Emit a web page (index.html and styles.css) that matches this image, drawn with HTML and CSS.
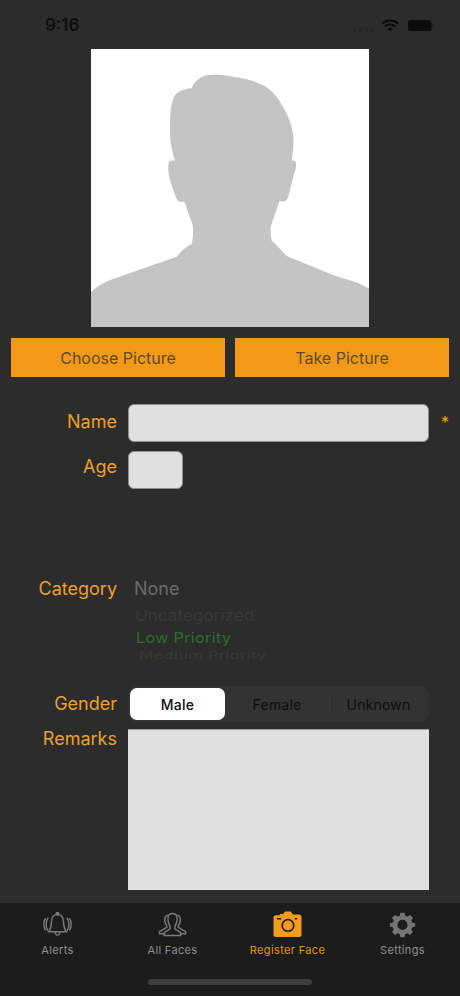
FILE: index.html
```html
<!DOCTYPE html>
<html lang="en">
<head>
<meta charset="utf-8">
<title>Register Face</title>
<link rel="stylesheet" href="styles.css">
</head>
<body>
<div class="app">
  <main class="main">
    <header class="status">
      <span class="time">9:16</span>
      <div class="status-icons">
        <svg class="signal" viewBox="0 0 21 5"><g fill="#262626"><rect x="0" y="0" width="3.500" height="5" rx="1"/><rect x="5.800" y="0" width="3.500" height="5" rx="1"/><rect x="11.600" y="0" width="3.500" height="5" rx="1"/><rect x="17.400" y="0" width="3.500" height="5" rx="1"/></g></svg>
        <svg class="wifi" viewBox="0 0 18 13"><path d="M1 4.600C5.600.4 12.400.4 17 4.600M3.900 7.400C6.900 4.800 11.100 4.800 14.100 7.400" fill="none" stroke="#0c0c0c" stroke-width="2.100"/><path d="M6.200 9.600C7.900 8.300 10.100 8.300 11.800 9.600L9 12.600Z" fill="#0c0c0c"/></svg>
        <svg class="battery" viewBox="0 0 26 11"><rect x="0" y="0" width="23.500" height="11" rx="2.600" fill="#0c0c0c"/><rect x="24.200" y="3.600" width="1.600" height="3.800" rx=".8" fill="#222"/></svg>
      </div>
    </header>

    <div class="photo">
      <svg class="silhouette" viewBox="91 49 278 278" aria-label="Face placeholder">
        <path fill="#c4c4c4" d="M91 327V292C96 287 103 283 110 280L176.700 256.700C181 251 186 247 191.700 244C193 238 193.500 232 192.700 225C190 218 187 210 185 202.500L183.300 201.700C181 202 179.500 202 178 201C175.500 197 174.500 193 173.300 190C171 183 168.500 177 168.300 170C168 165 168.500 161 170.500 160.700C172 160.400 173.500 160.500 175 160.700C172 151 170 142 170 133C169.800 123 170 115 171 108C172 102 173 98 175 95C179 91 185 89 191.700 88.300C193 84.500 195 81.500 198 79.500C200 78 202 76.800 204 76C209 74.800 214 74.700 220 75C226 75.300 231 76.300 236.700 77.300C246 79 255 81 263 85C272 90 278 98 283 106.700C288 115 292 125 293.300 136.700C293.800 145 293 153 291.700 160.700C293 160.300 295 160.700 296 162.500C296.500 167 295 172 293.300 176.700C291.500 184 290 190 288.300 196.700C287 199.500 285.500 201.300 283.300 201.700L279.300 201C277 210 273 218 270.700 227C270.500 232 270.800 236.500 271.700 240.700C277 245 282 251 286.700 256L333 275C341 278 350 280 358 283L369 288.500V327Z"/>
      </svg>
    </div>

    <div class="actions">
      <button class="action" type="button">Choose Picture</button>
      <button class="action" type="button">Take Picture</button>
    </div>

    <form class="form">
      <div class="row name-row">
        <label class="label">Name</label>
        <div class="input input-name"></div>
        <span class="required">*</span>
      </div>
      <div class="row age-row">
        <label class="label">Age</label>
        <div class="input input-age"></div>
      </div>
      <div class="row category-row">
        <label class="label">Category</label>
        <div class="picker">
          <div class="pick pick-none">None</div>
          <div class="pick pick-uncat">Uncategorized</div>
          <div class="pick pick-low">Low Priority</div>
          <div class="pick pick-med">Medium Priority</div>
        </div>
      </div>
      <div class="row gender-row">
        <label class="label">Gender</label>
        <div class="segments">
          <div class="segment segment-on">Male</div>
          <div class="segment segment-female">Female</div>
          <div class="divider"></div>
          <div class="segment">Unknown</div>
        </div>
      </div>
      <div class="row remarks-row">
        <label class="label">Remarks</label>
        <div class="remarks"></div>
      </div>
    </form>
  </main>

  <nav class="tabbar">
    <div class="tabs">
      <div class="tab">
        <svg class="tab-icon" viewBox="0 0 30 28" fill="none" stroke="#7a7a7a" stroke-width="1.500"><path d="M15 3.500C10.800 3.500 9 6.800 8.800 11C8.600 15.500 8 18.500 5.800 21.500H24.200C22 18.500 21.400 15.500 21.200 11C21 6.800 19.200 3.500 15 3.500Z"/><circle cx="15" cy="2.800" r="1.300" fill="#7a7a7a"/><path d="M12.500 21.500C12.700 23.800 13.800 25 15 25C16.200 25 17.300 23.800 17.500 21.500"/><path d="M5.300 7C2.600 10.500 2.600 17 5 20.500M2.700 7.500C.3 11 .3 16.500 2.500 20M24.700 7C27.400 10.500 27.400 17 25 20.500M27.300 7.500C29.700 11 29.700 16.500 27.500 20"/></svg>
        <span class="tab-label">Alerts</span>
      </div>
      <div class="tab">
        <svg class="tab-icon" viewBox="0 0 30 28" fill="none" stroke="#7a7a7a" stroke-width="1.500"><path d="M11 4C7.500 4.300 6.500 7 7 10.500C7.300 12.500 8 14 9 15.500V17L1.500 21.500V23.500H7"/><path d="M19 4C22.500 4.300 23.500 7 23 10.500C22.700 12.500 22 14 21 15.500V17L28.500 21.500V23.500H23"/><path d="M15 2.500C11 2.500 9.800 5.800 10.300 9.500C10.600 12 11.500 14.500 12.500 16V18.500L6.500 22.500V25.500H23.500V22.500L17.500 18.500V16C18.500 14.500 19.400 12 19.700 9.500C20.200 5.800 19 2.500 15 2.500Z"/></svg>
        <span class="tab-label">All Faces</span>
      </div>
      <div class="tab tab-on">
        <svg class="tab-icon" viewBox="0 0 30 28"><path fill="#f39c1f" d="M3 4.500H7V3H10.500L12.500 .5H18.500L20.500 3.500H27C28.500 3.500 29.500 4.500 29.500 6V25C29.500 26.500 28.500 27 27 27H3C1.500 27 .5 26.500 .5 25V7C.5 5.500 1.500 4.500 3 4.500Z"/><circle cx="15.500" cy="15" r="6" fill="none" stroke="#2a2113" stroke-width="1.800"/><path d="M4 8H8.500M22.500 8H25" stroke="#2a2113" stroke-width="1.500"/></svg>
        <span class="tab-label">Register Face</span>
      </div>
      <div class="tab">
        <svg class="tab-icon tab-gear" viewBox="-1 -1 32 32"><path fill="#757575" fill-rule="evenodd" d="M12.500 1H17.500L18.200 4.500L20.800 5.600L23.900 3.600L27.400 7.100L25.400 10.200L26.500 12.800L30 13.500V17.500L26.500 18.200L25.400 20.800L27.400 23.900L23.900 27.400L20.800 25.400L18.200 26.500L17.500 30H12.500L11.800 26.500L9.200 25.400L6.100 27.400L2.600 23.900L4.600 20.800L3.500 18.200L0 17.500V13.500L3.500 12.800L4.600 10.200L2.600 7.100L6.100 3.600L9.200 5.600L11.800 4.500ZM15 9.500A6 6 0 1 0 15 21.500A6 6 0 1 0 15 9.500Z"/></svg>
        <span class="tab-label">Settings</span>
      </div>
    </div>
    <div class="home"></div>
  </nav>
</div>
</body>
</html>
```
FILE: styles.css
```css
* {
  box-sizing: border-box;
}

html,
body {
  margin: 0;
  padding: 0;
  background: #2c2c2c;
}

body {
  font-family: Inter, "Liberation Sans", sans-serif;
}

.app {
  width: 460px;
  height: 996px;
  display: flex;
  flex-direction: column;
  overflow: hidden;
}

.main {
  flex: 1;
  display: flex;
  flex-direction: column;
  align-items: center;
}

.status {
  width: 100%;
  height: 49px;
  display: flex;
  justify-content: space-between;
  padding: 15px 26px 0 45px;
}

.time {
  font-size: 17px;
  font-weight: 600;
  line-height: 21px;
  color: #0f0f0f;
}

.status-icons {
  display: flex;
  align-items: flex-start;
}

.signal {
  width: 21px;
  height: 5px;
  margin: 12px 7px 0 0;
}

.wifi {
  width: 18px;
  height: 13px;
  margin: 4px 9px 0 0;
}

.battery {
  width: 26px;
  height: 11px;
  margin-top: 5px;
}

.photo {
  width: 278px;
  height: 278px;
  background: #ffffff;
}

.silhouette {
  display: block;
  width: 278px;
  height: 278px;
}

.actions {
  width: 100%;
  display: flex;
  gap: 10px;
  padding: 0 11px;
  margin-top: 11px;
}

.action {
  flex: 1;
  height: 39px;
  border: 0;
  border-radius: 0;
  padding: 0;
  background: #f29a18;
  color: #5c4a2c;
  font-family: inherit;
  font-size: 16px;
}

.form {
  width: 100%;
  margin-top: 27px;
  display: flex;
  flex-direction: column;
}

.row {
  display: flex;
  align-items: flex-start;
}

.label {
  width: 117px;
  margin-right: 11px;
  flex: none;
  text-align: right;
  font-size: 18px;
  line-height: 22px;
  color: #eea028;
}

.input {
  height: 38px;
  background: #e0e0e0;
  border: 1px solid #8e8e8e;
  border-radius: 6px;
}

.input-name {
  width: 301px;
}

.input-age {
  width: 55px;
}

.name-row .label {
  padding-top: 7px;
}

.age-row .label {
  padding-top: 5px;
}

.required {
  margin-left: 12px;
  font-size: 16px;
  line-height: 36px;
  color: #eea028;
}

.age-row {
  margin-top: 9px;
}

.category-row {
  margin-top: 89px;
}

.picker {
  height: 83px;
  margin-bottom: 8px;
  display: flex;
  flex-direction: column;
  overflow: hidden;
}

.pick {
  font-size: 18px;
  line-height: 22px;
  white-space: nowrap;
}

.pick-none {
  margin-left: 6px;
  color: #6a6a6a;
}

.pick-uncat {
  margin: 5px 0 0 7px;
  font-size: 17px;
  color: #383838;
  letter-spacing: .1px;
  transform: scaleY(.88);
  transform-origin: left center;
}

.pick-low {
  margin: -1px 0 0 8px;
  font-size: 16px;
  color: #2c6e2c;
  transform: scaleY(.92);
  transform-origin: left center;
  letter-spacing: .4px;
}

.pick-med {
  margin: 0 0 0 11px;
  font-size: 16px;
  color: #3a3a32;
  transform: scaleY(.62);
  transform-origin: left top;
  letter-spacing: .5px;
}

.gender-row {
  margin-top: 17px;
  align-items: center;
}

.segments {
  width: 301px;
  height: 36px;
  display: flex;
  align-items: center;
  padding: 2px;
  border-radius: 9px;
  background: #333333;
}

.segment {
  flex: 1;
  height: 32px;
  display: flex;
  align-items: center;
  justify-content: center;
  font-size: 14px;
  letter-spacing: .2px;
  color: #0e0e0e;
}

.segment-on {
  flex: none;
  width: 95px;
  border-radius: 7px;
  background: #ffffff;
  font-weight: 500;
}

.segment-female {
  flex: none;
  width: 104px;
}

.divider {
  width: 1px;
  height: 20px;
  background: #3d3d3d;
}

.remarks-row {
  margin-top: 7px;
}

.remarks-row .label {
  line-height: 20px;
}

.remarks {
  width: 301px;
  height: 161px;
  background: #e0e0e0;
  border-top: 1px solid #9a9a9a;
}

.tabbar {
  height: 93px;
  flex: none;
  display: flex;
  flex-direction: column;
  background: #1c1c1c;
}

.tabs {
  display: grid;
  grid-template-columns: 115px 115px 115px 115px;
  padding-top: 8px;
}

.tab {
  display: flex;
  flex-direction: column;
  align-items: center;
}

.tab-icon {
  width: 29px;
  height: 27px;
}

.tab-label {
  margin-top: 5px;
  font-size: 11px;
  line-height: 14px;
  letter-spacing: .35px;
  color: #8e8e8e;
}

.tab-on .tab-label {
  color: #e09526;
}

.home {
  width: 164px;
  height: 6px;
  margin: 22px auto 0;
  border-radius: 3px;
  background: #3e3e3e;
}
```
